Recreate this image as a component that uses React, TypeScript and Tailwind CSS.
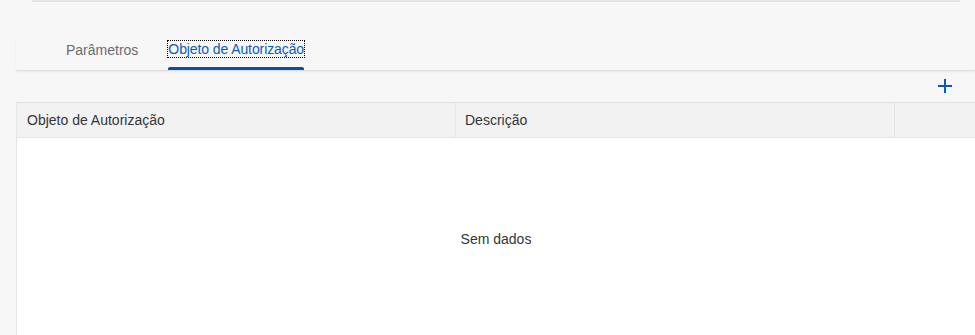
import React from "react";

export default function App() {
  return (
    <div
      className="w-[975px] h-[335px] overflow-hidden bg-[#f7f7f7] text-[#32363a]"
      style={{ fontFamily: '"Liberation Sans", Arial, sans-serif' }}
    >
      <div className="ml-[32px] w-[928px] h-[2px] bg-[#e5e5e5]" />
      <div className="ml-[16px] pt-[36px]">
        <div className="flex items-start gap-[30px] pl-[50px] h-[33px] border-b border-[#dcdcdc] shadow-[0_1px_2px_rgba(0,0,0,0.06)]">
          <div className="text-[14px] leading-[16px] pt-[4px] text-[#6a6d70]">Parâmetros</div>
          <div className="flex flex-col items-start h-full">
            <div className="mt-[3px] text-[14px] leading-[16px] tracking-[-0.1px] text-[#0a5eb0] outline outline-1 outline-dotted outline-black">
              Objeto de Autorização
            </div>
            <div className="mt-auto w-full h-[3px] rounded-t-[2px] bg-[#0a4fa0]" />
          </div>
        </div>
        <div className="flex justify-end h-[32px] items-center pr-[22px] border-b border-[#e0e0e0] shadow-[0_1px_1px_rgba(0,0,0,0.04)]">
          <svg width="16" height="16" viewBox="0 0 16 16" className="mb-[1px]">
            <path d="M8 1v14M1 8h14" stroke="#0a5cad" strokeWidth="2" />
          </svg>
        </div>
        <div className="bg-white border-l border-[#e5e5e5] h-[250px]">
          <div className="flex h-[35px] bg-[#f2f2f2] border-b border-[#e5e5e5] text-[14px]">
            <div className="w-[439px] flex items-center pl-[10px] border-r border-[#e5e5e5]">Objeto de Autorização</div>
            <div className="w-[439px] flex items-center pl-[9px] border-r border-[#e5e5e5]">Descrição</div>
            <div className="flex-1" />
          </div>
          <div className="flex justify-center pt-[91px] text-[14px]">
            <span>Sem dados</span>
          </div>
        </div>
      </div>
    </div>
  );
}
